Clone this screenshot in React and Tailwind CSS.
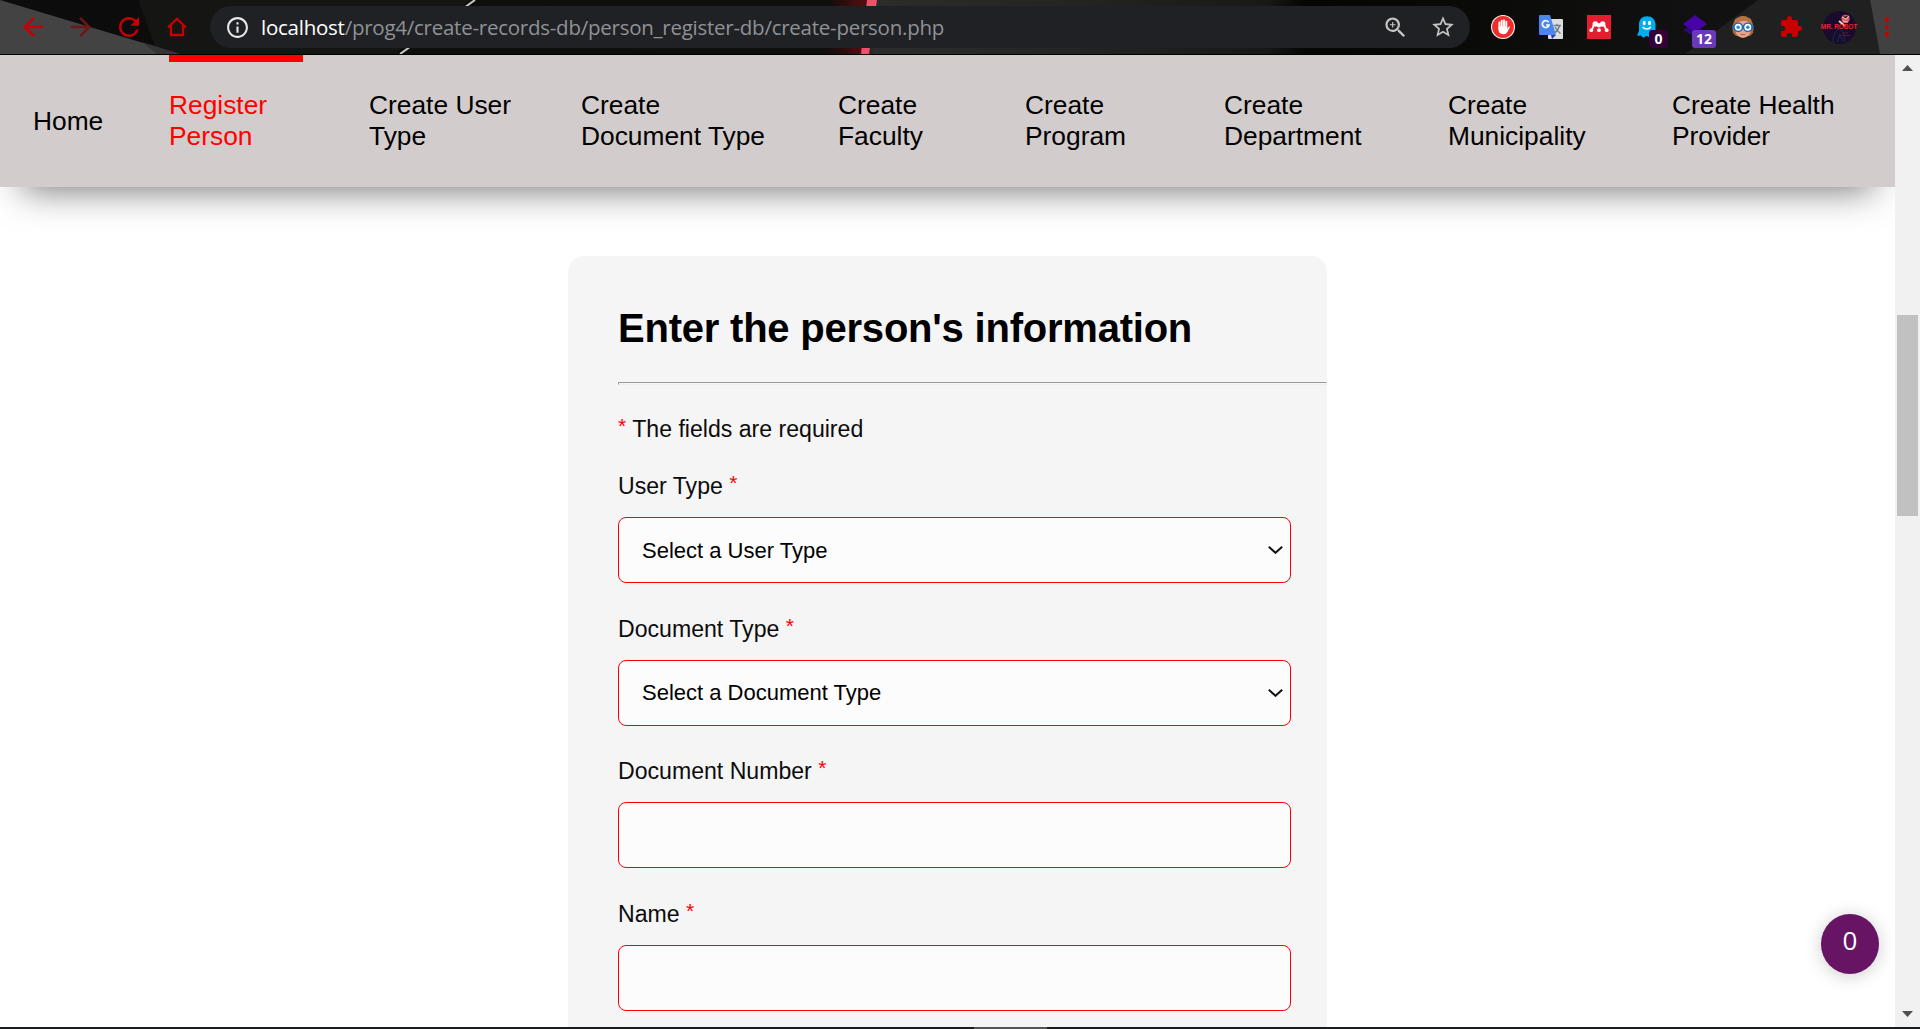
import React from "react";
import {
  MdArrowBack,
  MdArrowForward,
  MdRefresh,
  MdInfoOutline,
  MdZoomIn,
  MdStarBorder,
  MdExtension,
} from "react-icons/md";

const navItems = [
  { lines: ["Home"], width: "w-[70px]" },
  { lines: ["Register", "Person"], width: "w-[134px]", active: true },
  { lines: ["Create User", "Type"], width: "w-[146px]" },
  { lines: ["Create", "Document Type"], width: "w-[191px]" },
  { lines: ["Create", "Faculty"], width: "w-[121px]" },
  { lines: ["Create", "Program"], width: "w-[133px]" },
  { lines: ["Create", "Department"], width: "w-[158px]" },
  { lines: ["Create", "Municipality"], width: "w-[158px]" },
  { lines: ["Create Health", "Provider"], width: "w-[190px]" },
];

const fields = [
  { label: "User Type", placeholder: "Select a User Type" },
  { label: "Document Type", placeholder: "Select a Document Type" },
  { label: "Document Number" },
  { label: "Name" },
];

function ThemeBackdrop() {
  return (
    <svg className="absolute inset-0 h-full w-full" viewBox="0 0 1920 54" preserveAspectRatio="none">
      <defs>
        <linearGradient id="base" x1="0" x2="1">
          <stop offset="0" stopColor="#0c0c0c" />
          <stop offset="0.44" stopColor="#0f0f0d" />
          <stop offset="0.456" stopColor="#2c2c2c" />
          <stop offset="0.56" stopColor="#242424" />
          <stop offset="0.66" stopColor="#181818" />
          <stop offset="0.68" stopColor="#050504" />
          <stop offset="0.73" stopColor="#080806" />
          <stop offset="0.88" stopColor="#111111" />
          <stop offset="1" stopColor="#121212" />
        </linearGradient>
        <linearGradient id="glow" x1="0" x2="1">
          <stop offset="0" stopColor="#4d0a0c" stopOpacity="0" />
          <stop offset="1" stopColor="#560b0e" />
        </linearGradient>
      </defs>
      <rect width="1920" height="54" fill="url(#base)" />
      <polygon points="138,0 470,0 395,54 158,54" fill="#151514" />
      <polygon points="0,0 180,54 0,54" fill="#434343" />
      <polygon points="142,42 180,54 157,54" fill="#343434" />
      <path d="M475 0 L400 54" stroke="#c9c9c9" strokeWidth="2" />
      <polygon points="832,0 868,0 862,54 826,54" fill="url(#glow)" />
      <polygon points="867,0 877,0 869,54 861,54" fill="#f0506a" />
      <polygon points="1758,0 1870,0 1880,54 1685,54" fill="#202020" />
      <polygon points="1870,0 1920,0 1920,54 1880,54" fill="#414141" />
    </svg>
  );
}

function Cell({ children }) {
  return <div className="relative flex h-full w-12 shrink-0 items-center justify-center">{children}</div>;
}

function HomeIcon() {
  return (
    <svg className="h-5 w-5" viewBox="0 0 20 20" fill="none" stroke="#c80000" strokeWidth="2.3">
      <path d="M1 10.6 L10 1.8 L19 10.6" />
      <path d="M4 8.2 V18 H16 V8.2" />
    </svg>
  );
}

function AdBlockIcon() {
  return (
    <svg className="h-6 w-6" viewBox="0 0 24 24">
      <circle cx="12" cy="12" r="12" fill="#f4f4f4" />
      <circle cx="12" cy="12" r="10.9" fill="#f02c2c" />
      <g stroke="#fff" strokeLinecap="round" strokeWidth="1.9">
        <path d="M8.4 7.4 V14 M10.7 5.6 V13 M13 5.2 V13 M15.3 6.6 V14" />
      </g>
      <path d="M7.5 11.5 H16.2 V14 L17.6 11.8 Q18.8 11.1 19 12 L16.4 17 Q15.5 19.2 12.3 19.2 Q7.5 19 7.5 14.5Z" fill="#fff" />
    </svg>
  );
}

function TranslateIcon() {
  return (
    <svg className="h-6 w-6" viewBox="0 0 24 24">
      <rect x="9" y="4" width="15" height="20" rx="1" fill="#dedede" />
      <path d="M12 20 L17 20 L13 24Z" fill="#3440b0" />
      <path d="M0 1 Q0 0 1 0 H11 L17 20 H1 Q0 20 0 19Z" fill="#4a86ee" />
      <path d="M9.6 7.3 A3.4 3.4 0 1 0 10 10 H7.1" fill="none" stroke="#fff" strokeWidth="1.7" />
      <g fill="none" stroke="#6b8389" strokeWidth="1.4">
        <path d="M14.5 10.5 H22 M18 8.8 V10.5 M20.5 10.5 Q19.5 15 15.5 18 M16 12 Q18 16 21.5 18.5" />
      </g>
    </svg>
  );
}

function MendeleyIcon() {
  return (
    <svg className="h-6 w-6" viewBox="0 0 24 24">
      <rect width="24" height="24" fill="#e71c2e" />
      <path d="M4.4 15 Q6.4 13 6.4 10 M19.6 15 Q17.6 13 17.6 10" fill="none" stroke="#fff" strokeWidth="1.8" />
      <circle cx="8.3" cy="9" r="2.7" fill="#fff" />
      <circle cx="15.7" cy="9" r="2.7" fill="#fff" />
      <circle cx="12" cy="10.2" r="2.3" fill="#fff" />
      <circle cx="4.3" cy="15.2" r="1.9" fill="#fff" />
      <circle cx="12" cy="15.2" r="1.9" fill="#fff" />
      <circle cx="19.7" cy="15.2" r="1.9" fill="#fff" />
    </svg>
  );
}

function GhostIcon() {
  return (
    <svg className="h-6 w-6" viewBox="0 0 24 24">
      <path
        d="M12 1.2 C7 1.2 4 4.5 4 9.5 V15 C4 17.5 2 18.5 2.4 20.3 C3 21.6 4.8 20.2 5.8 20.4 C7 20.8 7.3 22.8 9 22.4 C10.2 22 11 20.8 12.2 21.2 C13.5 21.6 14.2 23 15.8 22.3 C17 21.6 17.5 21 20.5 21 V9.5 C20.5 4.5 17 1.2 12 1.2Z"
        fill="#00aef0"
      />
      <ellipse cx="9.2" cy="8" rx="1.5" ry="2.3" fill="#fff" />
      <ellipse cx="14.5" cy="8" rx="1.5" ry="2.3" fill="#fff" />
      <path d="M7.5 12 Q12 16 16 12" fill="none" stroke="#fff" strokeWidth="1.4" />
    </svg>
  );
}

function LayersIcon() {
  return (
    <svg className="h-6 w-6" viewBox="0 0 24 24">
      <path d="M0 15.5 L7 11 L20 15 L12 21.5Z" fill="#2c0878" />
      <path d="M12 0 L24 9 L12 17.5 L0 9Z" fill="#4803a8" />
    </svg>
  );
}

function FaceIcon() {
  return (
    <svg className="h-6 w-6" viewBox="0 0 24 24">
      <path d="M2 18 C0 9 4 1 12 1 C20 1 24 9 22 18 L19 21 H5Z" fill="#a8683c" />
      <path d="M4 11 Q6 5 16 6 Q20 8 20 13 Q20 22 12 23 Q4 22 4 13Z" fill="#e8a588" />
      <path d="M3 10 Q5 6 15 5.5 Q19 6 21 10 L20 4 L12 1 L4 4Z" fill="#b87343" />
      <path d="M1 11.5 H23" stroke="#1766b8" strokeWidth="2" />
      <circle cx="7.2" cy="12.3" r="4.2" fill="#fff" stroke="#1766b8" strokeWidth="1.4" />
      <circle cx="16.8" cy="12.3" r="4.2" fill="#fff" stroke="#1766b8" strokeWidth="1.4" />
      <circle cx="7.2" cy="12.3" r="1.8" fill="#2a8bdb" />
      <circle cx="16.8" cy="12.3" r="1.8" fill="#2a8bdb" />
      <path d="M9.5 19.5 H14.5" stroke="#b8645a" strokeWidth="1.2" />
    </svg>
  );
}

function ProfileIcon() {
  return (
    <div className="relative flex h-[33px] w-[33px] items-center justify-center">
      <svg className="absolute inset-0 h-full w-full" viewBox="0 0 33 33">
        <circle cx="16.5" cy="16.5" r="16.5" fill="#180b2b" />
        <path d="M10 32 Q10 20 16 18 Q22 20 22 31 M14 31 L17 23 L20 31" fill="none" stroke="#123150" strokeWidth="1" />
        <path d="M19 22 H25 M19 24.5 H27" stroke="#5b1736" strokeWidth="1" />
        <circle cx="22.5" cy="8" r="4.2" fill="#dd5663" />
        <path d="M19 6 L23 8 L26 5 M20 10 L25 11" stroke="#f3b0b0" strokeWidth="1.2" />
        <path d="M16 10 L22 15" stroke="#e9d6b0" strokeWidth="2" />
      </svg>
      <span className="relative whitespace-nowrap font-['Liberation_Sans',sans-serif] text-[6.5px] font-bold leading-none tracking-[-0.1px] text-[#ee2430]">
        MR. ROBOT
      </span>
    </div>
  );
}

function BrowserBar() {
  return (
    <header className="relative h-[55px] shrink-0 overflow-hidden border-b border-black bg-[#0c0c0c]">
      <ThemeBackdrop />
      <div className="relative flex h-[53px] items-center pl-[9px]">
        <Cell><MdArrowBack size={30} color="#c80000" /></Cell>
        <Cell><MdArrowForward size={30} color="#6e1717" /></Cell>
        <Cell><MdRefresh size={30} color="#c80000" /></Cell>
        <Cell><HomeIcon /></Cell>
        <div className="ml-[9px] mt-px flex h-[42px] w-[1260px] shrink-0 items-center rounded-full bg-[#202124] pl-[15px] pr-[3px]">
          <MdInfoOutline size={25} color="#e8e8e8" className="shrink-0" />
          <div className="ml-[11px] flex-1 whitespace-nowrap font-['Open_Sans',sans-serif] text-[20.5px] leading-none tracking-[-0.25px] text-[#8f9296]">
            <span className="text-white">localhost</span>/prog4/create-records-db/person_register-db/create-person.php
          </div>
          <Cell><MdZoomIn size={27} color="#c4c4c4" /></Cell>
          <Cell><MdStarBorder size={26} color="#c4c4c4" /></Cell>
        </div>
        <div className="ml-[9px] mt-px flex h-full items-center">
          <Cell><AdBlockIcon /></Cell>
          <Cell><TranslateIcon /></Cell>
          <Cell><MendeleyIcon /></Cell>
          <Cell>
            <GhostIcon />
            <span className="absolute left-[26px] top-[29px] flex h-[18px] w-[19px] items-center justify-center rounded-[3px] bg-[#330338] font-['Open_Sans',sans-serif] text-[14px] font-bold leading-none text-white">0</span>
          </Cell>
          <Cell>
            <LayersIcon />
            <span className="absolute left-[21px] top-[29px] flex h-[18px] w-6 items-center justify-center rounded-[3px] bg-[#6a38bb] font-['Open_Sans',sans-serif] text-[14px] font-bold leading-none text-white">12</span>
          </Cell>
          <Cell><FaceIcon /></Cell>
          <Cell><MdExtension size={24} color="#c80000" /></Cell>
          <Cell><ProfileIcon /></Cell>
          <Cell>
            <div className="flex flex-col gap-[3px]">
              <i className="h-[4.5px] w-[4.5px] rounded-full bg-[#c80000]" />
              <i className="h-[4.5px] w-[4.5px] rounded-full bg-[#c80000]" />
              <i className="h-[4.5px] w-[4.5px] rounded-full bg-[#c80000]" />
            </div>
          </Cell>
        </div>
      </div>
    </header>
  );
}

function NavBar() {
  return (
    <nav className="flex h-[132px] shrink-0 gap-[66px] bg-[#d3cccc] pl-[33px] text-[26.35px] leading-[31px] text-black shadow-[0_25px_36px_-22px_rgba(0,0,0,0.55)]">
      {navItems.map((item) => (
        <a
          key={item.lines.join(" ")}
          className={`${item.width} flex shrink-0 flex-col justify-center border-t-[7px] pb-[7px] ${item.active ? "border-[#ff0000] text-[#ff0000]" : "border-transparent"}`}
        >
          {item.lines.map((line) => (
            <span key={line} className="whitespace-nowrap">{line}</span>
          ))}
        </a>
      ))}
    </nav>
  );
}

function Required() {
  return <span className="align-[4px] text-[21px] leading-none text-[#ff0000]">*</span>;
}

function Field({ label, placeholder }) {
  return (
    <div className="h-[142.67px]">
      <div className="h-[47px] leading-[32px] text-[#0c0c0c]">
        {label} <Required />
      </div>
      <div className="flex h-[66px] w-[673px] items-center justify-between rounded-[8px] border border-[#f00] bg-[#fcfcfc] pl-[23px] pr-[7px] text-[22px] text-black">
        <span>{placeholder}</span>
        {placeholder && (
          <svg className="h-2 w-[15px]" viewBox="0 0 15 8" fill="none" stroke="#111" strokeWidth="2">
            <path d="M0.8 0.8 L7.5 6.8 L14.2 0.8" />
          </svg>
        )}
      </div>
    </div>
  );
}

function ScrollBar() {
  return (
    <div className="flex w-[25px] shrink-0 flex-col items-center bg-[#f1f1f1]">
      <svg className="mt-[10px] h-[6px] w-[11px]" viewBox="0 0 11 6"><path d="M5.5 0 L11 6 H0Z" fill="#505050" /></svg>
      <div className="mt-[244px] h-[201px] w-[21px] bg-[#c1c1c1]" />
      <svg className="mb-[10px] mt-auto h-[6px] w-[11px]" viewBox="0 0 11 6"><path d="M0 0 H11 L5.5 6Z" fill="#505050" /></svg>
    </div>
  );
}

export default function App() {
  return (
    <div className="relative flex h-[1029px] w-[1920px] flex-col overflow-hidden bg-white font-['Liberation_Sans',Arial,sans-serif]">
      <BrowserBar />
      <div className="flex h-[972px] shrink-0">
        <main className="flex w-[1895px] shrink-0 flex-col overflow-hidden bg-white">
          <NavBar />
          <section className="ml-[568px] mt-[69px] h-[900px] w-[759px] shrink-0 rounded-t-[16px] bg-[#f5f5f5] pl-[50px] pt-[48px] text-[23.1px]">
            <h1 className="text-[40px] font-bold leading-[48px] tracking-[-0.22px] text-black">Enter the person's information</h1>
            <div className="mt-[30px] h-[3px] border border-b-[#eeeeee] border-l-[#9a9a9a] border-r-[#eeeeee] border-t-[#9a9a9a]" />
            <p className="mt-[28px] h-[57px] leading-[32px] text-[#0c0c0c]">
              <Required /> The fields are required
            </p>
            {fields.map((field) => (
              <Field key={field.label} {...field} />
            ))}
          </section>
        </main>
        <ScrollBar />
      </div>
      <footer className="flex h-[2px] shrink-0 bg-[#1b1c1e]">
        <div className="ml-[974px] w-[73px] bg-[#555555]" />
      </footer>
      <div className="absolute left-[1821px] top-[914px] flex h-[60px] w-[58px] items-center justify-center rounded-[50%] bg-[#671465] pb-[8px] font-['Open_Sans',sans-serif] text-[26px] leading-none text-white shadow-[0_2px_18px_rgba(0,0,0,0.2)]">
        0
      </div>
    </div>
  );
}
